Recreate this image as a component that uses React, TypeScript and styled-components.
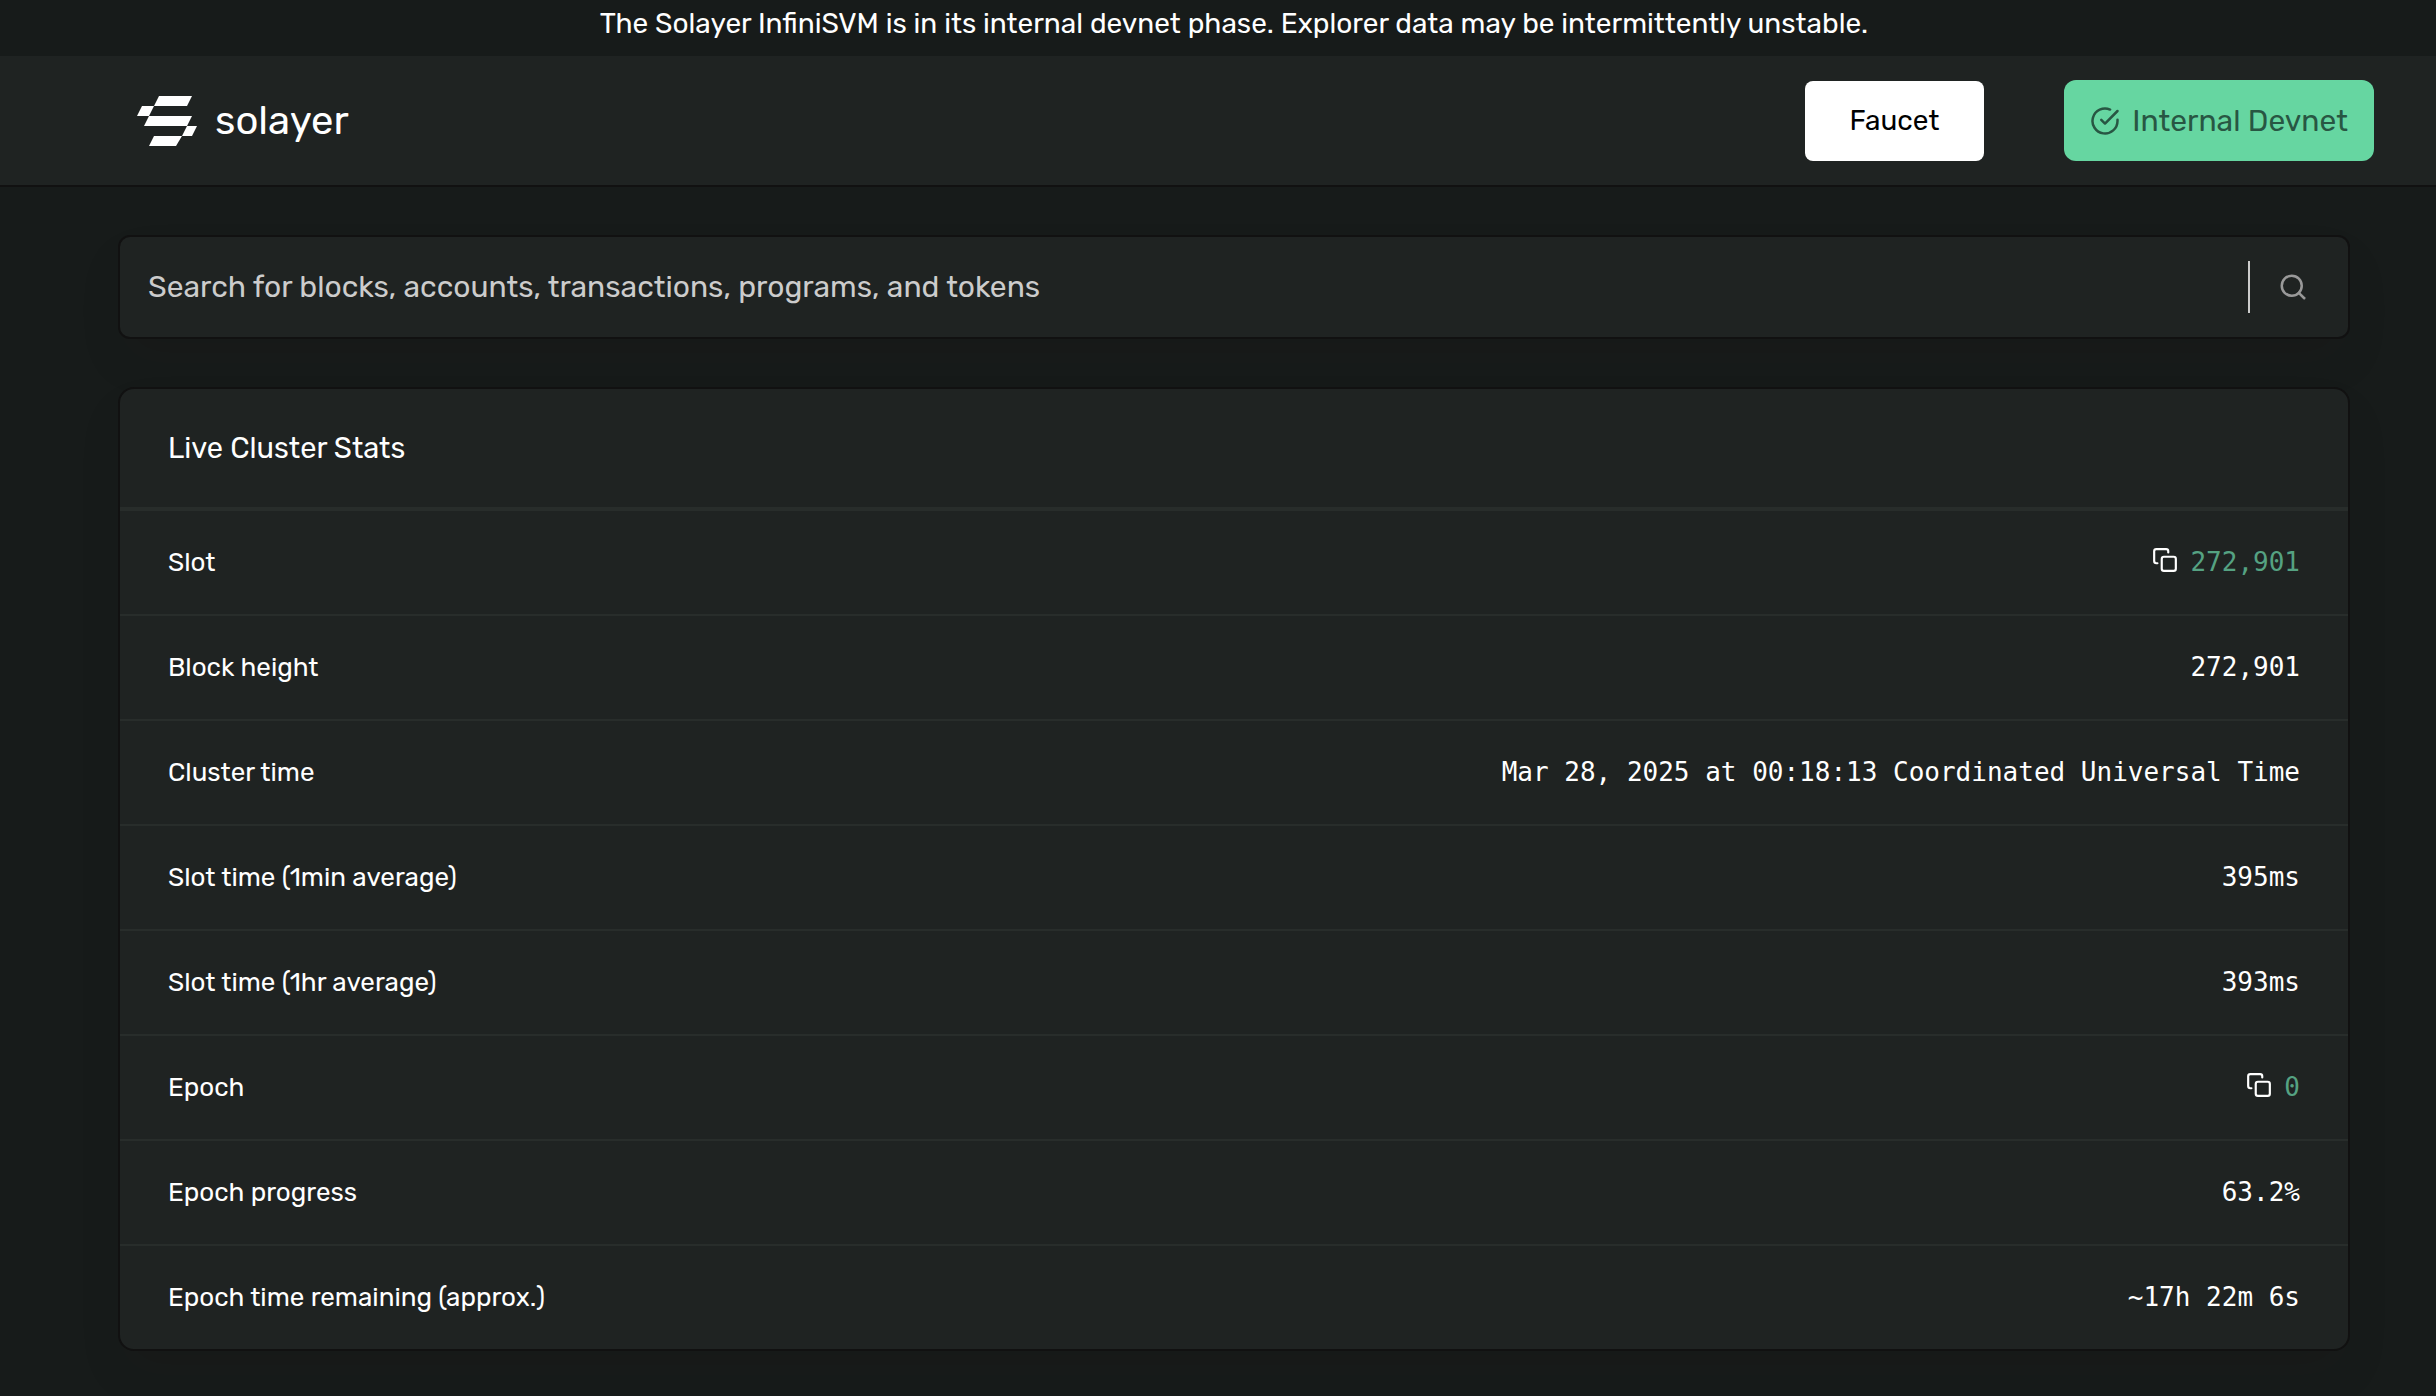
import React from 'react';
import styled, { createGlobalStyle } from 'styled-components';
import { FiCheckCircle, FiCopy, FiSearch } from 'react-icons/fi';

const color = {
  page: '#171b1a',
  surface: '#1f2322',
  edge: '#111111',
  line: '#282d2b',
  text: '#ffffff',
  muted: '#cccccc',
  icon: '#999999',
  link: '#55a282',
  accent: '#66d6a1',
  accentText: '#285643',
};

const sans = "Rubik, Roboto, 'Liberation Sans', sans-serif";
const mono = "'DejaVu Sans Mono', 'Liberation Mono', monospace";

const GlobalStyle = createGlobalStyle`
  *, *::before, *::after {
    box-sizing: border-box;
  }
  body {
    margin: 0;
    background: ${color.page};
    color: ${color.text};
    font-family: ${sans};
    font-size: 26px;
    line-height: 40px;
  }
`;

const Banner = styled.div`
  padding: 4px 0 12px 32px;
  font-size: 28px;
  text-align: center;
`;

const Navbar = styled.header`
  display: flex;
  align-items: center;
  justify-content: space-between;
  padding: 24px 62px 24px 137px;
  background: ${color.surface};
  border-bottom: 2px solid ${color.edge};
`;

const Brand = styled.a`
  display: flex;
  align-items: center;
  gap: 18px;
  color: ${color.text};
  text-decoration: none;
`;

const BrandMark = styled.svg`
  width: 60px;
  height: 50px;
  fill: currentColor;
`;

const BrandName = styled.span`
  font-size: 40px;
`;

const Actions = styled.nav`
  display: flex;
  align-items: center;
  gap: 80px;
`;

const FaucetButton = styled.button`
  height: 80px;
  padding: 0 45px;
  border: 0;
  border-radius: 8px;
  background: #ffffff;
  color: #000000;
  font: 400 28px/40px ${sans};
`;

const ClusterButton = styled.button`
  display: flex;
  align-items: center;
  gap: 12px;
  height: 81px;
  padding: 0 26px;
  border: 0;
  border-radius: 12px;
  background: ${color.accent};
  color: ${color.accentText};
  font: 400 30px/40px ${sans};
`;

const Main = styled.main`
  display: flex;
  flex-direction: column;
  gap: 48px;
  padding: 48px 86px 45px 118px;
`;

const SearchBox = styled.form`
  display: flex;
  align-items: center;
  height: 104px;
  border: 2px solid ${color.edge};
  border-radius: 12px;
  background: ${color.surface};
  box-shadow: 0 24px 48px rgba(30, 20, 18, 0.06);
`;

const SearchInput = styled.input`
  flex: 1;
  min-width: 0;
  padding: 0 28px;
  border: 0;
  outline: 0;
  background: transparent;
  color: ${color.text};
  font: 400 30px/40px ${sans};

  &::placeholder {
    color: ${color.muted};
    opacity: 1;
  }
`;

const SearchButton = styled.button`
  display: flex;
  align-items: center;
  height: 52px;
  padding: 0 40px 0 28px;
  border: 0;
  border-left: 2px solid ${color.muted};
  background: transparent;
  color: ${color.icon};
`;

const Card = styled.section`
  border: 2px solid ${color.edge};
  border-radius: 16px;
  background: ${color.surface};
  box-shadow: 0 24px 48px rgba(30, 20, 18, 0.06);
`;

const CardHeader = styled.div`
  padding: 39px 48px;
  border-bottom: 2px solid ${color.line};
`;

const CardTitle = styled.h2`
  margin: 0;
  font-size: 29px;
  font-weight: 400;
  line-height: 40px;
`;

const StatsTable = styled.table`
  width: 100%;
  border-spacing: 0;
`;

const Label = styled.th`
  height: 105px;
  padding: 0 48px;
  border-top: 2px solid ${color.line};
  font-weight: 400;
  text-align: left;
`;

const Value = styled.td`
  height: 105px;
  padding: 0 48px 2px;
  border-top: 2px solid ${color.line};
  font-family: ${mono};
  font-size: 26px;
`;

const ValueContent = styled.div`
  display: flex;
  align-items: center;
  justify-content: flex-end;
  gap: 12px;
`;

const CopyButton = styled.button`
  display: flex;
  padding: 0 0 4px;
  border: 0;
  background: transparent;
  color: ${color.text};
`;

const ValueLink = styled.a`
  color: ${color.link};
  text-decoration: none;
`;

interface Stat {
  label: string;
  value: string;
  linked?: boolean;
}

const stats: Stat[] = [
  { label: 'Slot', value: '272,901', linked: true },
  { label: 'Block height', value: '272,901' },
  { label: 'Cluster time', value: 'Mar 28, 2025 at 00:18:13 Coordinated Universal Time' },
  { label: 'Slot time (1min average)', value: '395ms' },
  { label: 'Slot time (1hr average)', value: '393ms' },
  { label: 'Epoch', value: '0', linked: true },
  { label: 'Epoch progress', value: '63.2%' },
  { label: 'Epoch time remaining (approx.)', value: '~17h 22m 6s' },
];

function StatRow({ label, value, linked }: Stat) {
  return (
    <tr>
      <Label scope="row">{label}</Label>
      <Value>
        <ValueContent>
          {linked ? (
            <>
              <CopyButton type="button" aria-label={`Copy ${label}`}>
                <FiCopy size={26} />
              </CopyButton>
              <ValueLink href="#">{value}</ValueLink>
            </>
          ) : (
            value
          )}
        </ValueContent>
      </Value>
    </tr>
  );
}

export default function App() {
  return (
    <>
      <GlobalStyle />
      <Banner>
        The Solayer InfiniSVM is in its internal devnet phase. Explorer data may be intermittently unstable.
      </Banner>
      <Navbar>
        <Brand href="#">
          <BrandMark viewBox="0 0 60 50" aria-hidden="true">
            <path d="M22 0H55L50 10H17Z" />
            <path d="M5 10H17L12 20H0Z" />
            <path d="M12 20H55L50 30H7Z" />
            <path d="M50 30H60L55 40H45Z" />
            <path d="M17 40H45L39 50H12Z" />
          </BrandMark>
          <BrandName>solayer</BrandName>
        </Brand>
        <Actions>
          <FaucetButton type="button">Faucet</FaucetButton>
          <ClusterButton type="button">
            <FiCheckCircle size={30} />
            Internal Devnet
          </ClusterButton>
        </Actions>
      </Navbar>
      <Main>
        <SearchBox role="search">
          <SearchInput
            type="text"
            aria-label="Search"
            placeholder="Search for blocks, accounts, transactions, programs, and tokens"
          />
          <SearchButton type="button" aria-label="Submit search">
            <FiSearch size={30} />
          </SearchButton>
        </SearchBox>
        <Card>
          <CardHeader>
            <CardTitle>Live Cluster Stats</CardTitle>
          </CardHeader>
          <StatsTable>
            <tbody>
              {stats.map((stat) => (
                <StatRow key={stat.label} {...stat} />
              ))}
            </tbody>
          </StatsTable>
        </Card>
      </Main>
    </>
  );
}
